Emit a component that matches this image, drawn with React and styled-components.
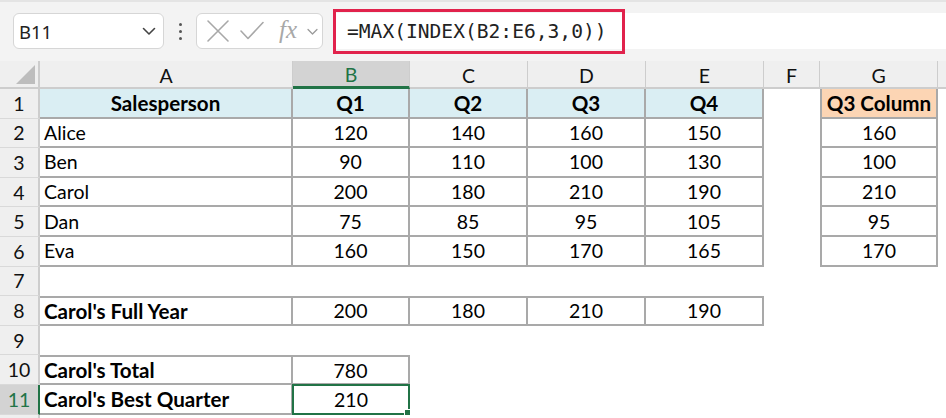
import React from 'react';
import styled, { createGlobalStyle } from 'styled-components';

const GlobalStyle = createGlobalStyle`
  html, body {
    margin: 0;
    padding: 0;
    background: #f3f3f3;
    overflow: hidden;
  }
`;

const GREEN = '#217346';
const LINE = '#a9a9a9';
const HEAD_BG = '#efefef';
const HEAD_LINE = '#cdcdcd';

// last header is the sliver of column H, its letter is off screen
const COLS = ['A', 'B', 'C', 'D', 'E', 'F', 'G', ''];

const Page = styled.div`
  width: 946px;
  height: 418px;
  overflow: hidden;
  display: flex;
  flex-direction: column;
`;

const Toolbar = styled.div`
  flex-shrink: 0;
  height: 61px;
  box-sizing: border-box;
  padding: 11px 0 0 13px;
  display: flex;
  align-items: flex-start;
  background: #f3f3f3;
  border-top: 2px solid #e4e4e4;
`;

const NameBox = styled.div`
  width: 151px;
  height: 36px;
  box-sizing: border-box;
  background: #fff;
  border: 1px solid #d6d6d6;
  border-radius: 6px;
  display: flex;
  align-items: center;
  justify-content: space-between;
  padding: 0 6px 0 5px;
  font-family: 'Noto Sans', 'Liberation Sans', sans-serif;
  font-size: 18.5px;
  color: #222;
`;

const Dots = styled.div`
  width: 32px;
  height: 36px;
  display: flex;
  flex-direction: column;
  align-items: center;
  justify-content: center;
  gap: 4px;

  span {
    width: 3px;
    height: 3px;
    border-radius: 50%;
    background: #555;
  }
`;

const FxBox = styled.div`
  width: 127px;
  height: 36px;
  box-sizing: border-box;
  background: #fff;
  border: 1px solid #d6d6d6;
  border-radius: 6px;
  display: flex;
  align-items: center;
  padding: 0 0 0 9px;
  gap: 9px;
`;

const Fx = styled.span`
  font-family: 'Liberation Serif', 'DejaVu Serif', serif;
  font-style: italic;
  font-size: 25px;
  color: #a8a8a8;
  line-height: 1;
  margin-left: 5px;
  margin-top: -3px;
`;

const FormulaBar = styled.div`
  flex: 1;
  height: 36px;
  margin-left: 10px;
  background: #fff;
  display: flex;
  align-items: center;
`;

const Highlight = styled.div`
  flex-shrink: 0;
  width: 292px;
  height: 45px;
  box-sizing: border-box;
  border: 3px solid #e1224c;
  display: flex;
  align-items: center;
  padding-left: 11px;
  font-family: 'DejaVu Sans Mono', 'Liberation Mono', monospace;
  font-size: 19.6px;
  color: #222;
`;

const Grid = styled.div`
  flex-shrink: 0;
  display: grid;
  grid-template-columns: 40px 253px 117px 118px 118px 118px 56px 118px 118px;
  grid-template-rows: 28px repeat(12, 29.6px);
  background: #fff;
  font-family: Lato, 'Noto Sans', sans-serif;
  font-size: 19.5px;
  color: #000;
`;

const Corner = styled.div`
  background: ${HEAD_BG};
  border-right: 2px solid ${HEAD_LINE};
  border-bottom: 2px solid ${HEAD_LINE};
  display: flex;
  align-items: flex-end;
  justify-content: flex-end;
  padding: 0 3px 3px 0;
`;

const ColHead = styled.div`
  background: ${(p) => (p.$active ? '#d3d3d3' : HEAD_BG)};
  color: ${(p) => (p.$active ? GREEN : '#111')};
  border-right: 1px solid ${HEAD_LINE};
  border-bottom: ${(p) => (p.$active ? `3px solid ${GREEN}` : `2px solid ${HEAD_LINE}`)};
  display: flex;
  align-items: center;
  justify-content: center;
  font-size: 19.5px;
  padding-top: 2px;
`;

const RowHead = styled.div`
  background: ${(p) => (p.$active ? '#d3d3d3' : HEAD_BG)};
  color: ${(p) => (p.$active ? GREEN : '#111')};
  border-right: ${(p) => (p.$active ? `2px solid ${GREEN}` : `2px solid ${HEAD_LINE}`)};
  border-bottom: 1px solid #d9d9d9;
  display: flex;
  align-items: center;
  justify-content: center;
  font-size: 19.5px;
`;

const Cell = styled.div`
  position: relative;
  box-sizing: border-box;
  background: ${(p) => p.$bg || '#fff'};
  font-weight: ${(p) => (p.$bold ? 700 : 400)};
  font-size: ${(p) => (p.$bold ? '20.6px' : '19.5px')};
  display: flex;
  align-items: center;
  justify-content: ${(p) => (p.$left ? 'flex-start' : 'center')};
  padding-left: ${(p) => (p.$left ? '4px' : '0')};
  white-space: nowrap;
  border-right: ${(p) => (p.$b ? `2px solid ${LINE}` : 'none')};
  border-bottom: ${(p) => (p.$b ? `2px solid ${LINE}` : 'none')};
  border-top: ${(p) => (p.$top ? `2px solid ${LINE}` : 'none')};
  border-left: ${(p) => (p.$edge ? `2px solid ${LINE}` : 'none')};
`;

const Selected = styled(Cell)`
  border: 2px solid ${GREEN};
  margin: -1px 0 0 -1px;

  &::after {
    content: '';
    position: absolute;
    right: -5px;
    bottom: -5px;
    width: 7px;
    height: 7px;
    background: ${GREEN};
    border: 1px solid #fff;
  }
`;

const HEAD = '#daeef3';
const PEACH = '#fcd5b4';

const people = [
  ['Alice', 120, 140, 160, 150, 160],
  ['Ben', 90, 110, 100, 130, 100],
  ['Carol', 200, 180, 210, 190, 210],
  ['Dan', 75, 85, 95, 105, 95],
  ['Eva', 160, 150, 170, 165, 170],
];

function Chevron({ size = 14, color = '#444' }) {
  return (
    <svg width={size} height={size} viewBox="0 0 16 16" fill="none">
      <path d="M2.5 5.5 L8 11 L13.5 5.5" stroke={color} strokeWidth="1.6" strokeLinecap="round" strokeLinejoin="round" />
    </svg>
  );
}

function Cross() {
  return (
    <svg width="24" height="24" viewBox="0 0 24 24" fill="none">
      <path d="M2 2 L22 22 M22 2 L2 22" stroke="#a8a8a8" strokeWidth="1.6" strokeLinecap="round" />
    </svg>
  );
}

function Check() {
  return (
    <svg width="26" height="24" viewBox="0 0 26 24" fill="none">
      <path d="M2 12 L9 19.5 L24 3.5" stroke="#a8a8a8" strokeWidth="1.6" strokeLinecap="round" strokeLinejoin="round" />
    </svg>
  );
}

function Triangle() {
  return (
    <svg width="19" height="19" viewBox="0 0 19 19">
      <path d="M19 0 L19 19 L0 19 Z" fill="#bdbdbd" />
    </svg>
  );
}

function Empty({ n = 9 }) {
  return Array.from({ length: n }).map((_, i) => <Cell key={i} />);
}

export default function App() {
  return (
    <Page>
      <GlobalStyle />
      <Toolbar>
        <NameBox>
          B11
          <Chevron size={16} />
        </NameBox>
        <Dots>
          <span />
          <span />
          <span />
        </Dots>
        <FxBox>
          <Cross />
          <Check />
          <Fx>fx</Fx>
          <Chevron size={13} color="#9a9a9a" />
        </FxBox>
        <FormulaBar>
          <Highlight>=MAX(INDEX(B2:E6,3,0))</Highlight>
        </FormulaBar>
      </Toolbar>

      <Grid>
        <Corner>
          <Triangle />
        </Corner>
        {COLS.map((c, i) => (
          <ColHead key={i} $active={c === 'B'}>
            {c}
          </ColHead>
        ))}

        <RowHead>1</RowHead>
        <Cell $b $bold $bg={HEAD}>Salesperson</Cell>
        {['Q1', 'Q2', 'Q3', 'Q4'].map((q) => (
          <Cell key={q} $b $bold $bg={HEAD}>
            {q}
          </Cell>
        ))}
        <Cell />
        <Cell $b $edge $bold $bg={PEACH}>Q3 Column</Cell>
        <Cell />

        {people.map(([name, q1, q2, q3, q4, g], i) => (
          <React.Fragment key={name}>
            <RowHead>{i + 2}</RowHead>
            <Cell $b $left>{name}</Cell>
            <Cell $b>{q1}</Cell>
            <Cell $b>{q2}</Cell>
            <Cell $b>{q3}</Cell>
            <Cell $b>{q4}</Cell>
            <Cell />
            <Cell $b $edge>{g}</Cell>
            <Cell />
          </React.Fragment>
        ))}

        <RowHead>7</RowHead>
        <Empty n={8} />

        <RowHead>8</RowHead>
        <Cell $b $top $left $bold>Carol's Full Year</Cell>
        {[200, 180, 210, 190].map((v, i) => (
          <Cell key={i} $b $top>
            {v}
          </Cell>
        ))}
        <Empty n={3} />

        <RowHead>9</RowHead>
        <Empty n={8} />

        <RowHead>10</RowHead>
        <Cell $b $top $left $bold>Carol's Total</Cell>
        <Cell $b $top>780</Cell>
        <Empty n={6} />

        <RowHead $active>11</RowHead>
        <Cell $b $left $bold>Carol's Best Quarter</Cell>
        <Selected>210</Selected>
        <Empty n={6} />

        <RowHead />
        <Empty n={8} />
      </Grid>
    </Page>
  );
}
